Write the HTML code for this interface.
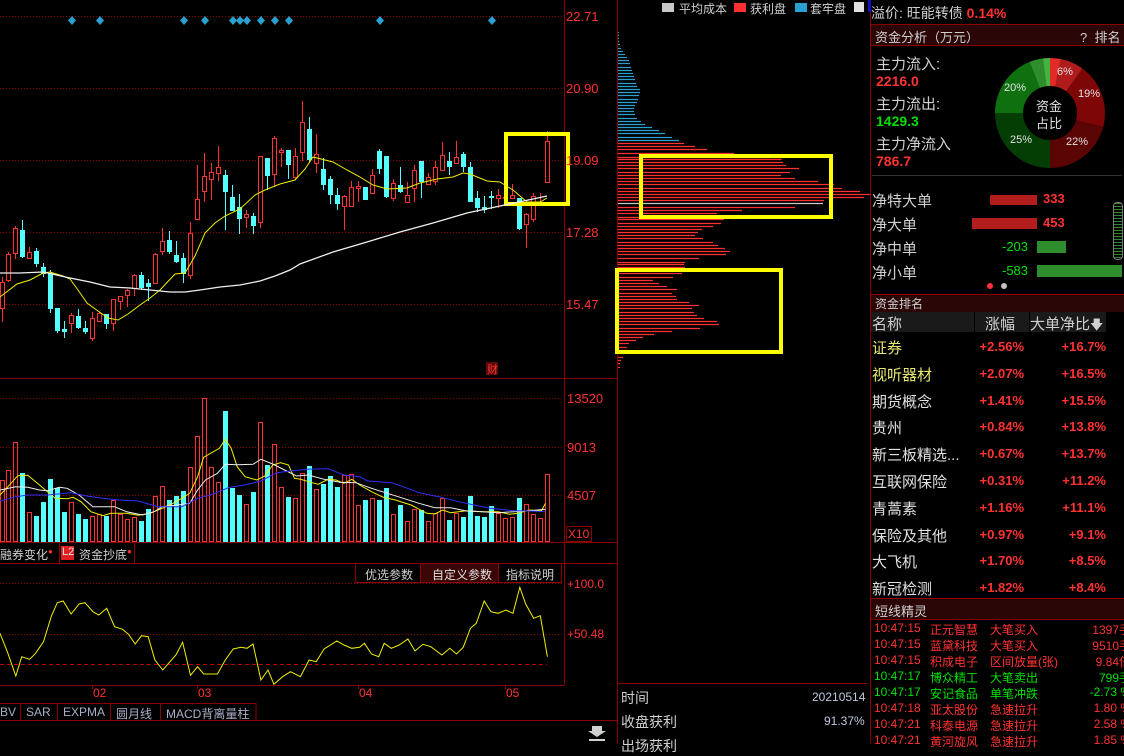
<!DOCTYPE html>
<html><head><meta charset="utf-8">
<style>
*{margin:0;padding:0;box-sizing:border-box}
body{width:1124px;height:743px;background:#000;overflow:hidden;position:relative;font-family:"Liberation Sans","Noto Sans CJK SC",sans-serif;color:#d0d0d0}
.a{position:absolute;white-space:nowrap}
.r{color:#ff3232}.g{color:#00e000}.y{color:#e8e870}.w{color:#e0e0e0}
</style></head><body>
<svg id="s" class="a" style="left:0;top:0" width="1124" height="743" xmlns="http://www.w3.org/2000/svg">
<g id="grid" stroke="#8a0000" stroke-dasharray="1,2" stroke-width="1">
<line x1="0" y1="16.5" x2="564" y2="16.5"/><line x1="0" y1="88.5" x2="564" y2="88.5"/><line x1="0" y1="160.5" x2="564" y2="160.5"/><line x1="0" y1="232.5" x2="564" y2="232.5"/><line x1="0" y1="304.5" x2="564" y2="304.5"/>
<line x1="0" y1="398.5" x2="564" y2="398.5"/><line x1="0" y1="447.5" x2="564" y2="447.5"/><line x1="0" y1="495.5" x2="564" y2="495.5"/>
<line x1="0" y1="583.5" x2="564" y2="583.5"/><line x1="0" y1="634.5" x2="564" y2="634.5"/>
</g>
<line x1="0" y1="664.5" x2="547" y2="664.5" stroke="#c00000" stroke-dasharray="4,3"/>
<g stroke="#8a0000" stroke-width="1" fill="none">
<line x1="564.5" y1="0" x2="564.5" y2="685"/>
<line x1="617.5" y1="0" x2="617.5" y2="743"/>
<line x1="0" y1="378.5" x2="617" y2="378.5"/>
<line x1="0" y1="542.5" x2="617" y2="542.5"/>
<line x1="0" y1="563.5" x2="617" y2="563.5"/>
<line x1="0" y1="685.5" x2="564" y2="685.5"/>
<line x1="0" y1="720.5" x2="617" y2="720.5"/>
<line x1="617" y1="683.5" x2="868" y2="683.5"/>
<line x1="870.5" y1="0" x2="870.5" y2="743"/>
<rect x="355.5" y="563.5" width="206" height="19"/>
<line x1="420.5" y1="563" x2="420.5" y2="582"/><line x1="498.5" y1="563" x2="498.5" y2="582"/>
<rect x="566.5" y="526.5" width="25" height="15"/>
<line x1="92.5" y1="685" x2="92.5" y2="689"/><line x1="197.5" y1="685" x2="197.5" y2="689"/><line x1="358.5" y1="685" x2="358.5" y2="689"/><line x1="505.5" y1="685" x2="505.5" y2="689"/>
<line x1="59.5" y1="543" x2="59.5" y2="563"/><line x1="134.5" y1="543" x2="134.5" y2="563"/>
<rect x="-1" y="703.5" width="257" height="17"/>
<line x1="20.5" y1="703" x2="20.5" y2="720"/><line x1="57.5" y1="703" x2="57.5" y2="720"/><line x1="110.5" y1="703" x2="110.5" y2="720"/><line x1="160.5" y1="703" x2="160.5" y2="720"/>
</g>
<rect x="421" y="564" width="77" height="18" fill="#3a0606"/>
<rect x="61" y="546" width="13" height="14" fill="#e02020"/>
<g id="cand"></g><g id="vol"></g>
<g id="chip"></g>
<g fill="none" stroke="#ffff00" stroke-width="4">
<rect x="506" y="134" width="62" height="70"/>
<rect x="641" y="156" width="190" height="61"/>
<rect x="617" y="270" width="164" height="82"/>
</g>
<g id="dia" fill="#2aa0d0"></g>
<rect x="486" y="362" width="12" height="13" fill="#5a0a0a"/>
<path d="M592 726h10v5h4l-9 6-9-6h4z M589 739h16v2h-16z" fill="#d0d0d0"/>
<rect x="662" y="3" width="12" height="9" fill="#c8c8c8"/><rect x="734" y="3" width="12" height="9" fill="#ff3030"/><rect x="795" y="3" width="12" height="9" fill="#2aa0d0"/>
<rect x="854" y="2" width="10" height="10" fill="#e0e0e0"/>
<rect x="868" y="0" width="3" height="12" fill="#1010c0"/>
</svg>

<div class="a r" style="left:566px;top:9px;font-size:13px">22.71</div>
<div class="a r" style="left:566px;top:81px;font-size:13px">20.90</div>
<div class="a r" style="left:566px;top:153px;font-size:13px">19.09</div>
<div class="a r" style="left:566px;top:225px;font-size:13px">17.28</div>
<div class="a r" style="left:566px;top:297px;font-size:13px">15.47</div>
<div class="a r" style="left:567px;top:391px;font-size:13px">13520</div>
<div class="a r" style="left:567px;top:440px;font-size:13px">9013</div>
<div class="a r" style="left:567px;top:488px;font-size:13px">4507</div>
<div class="a r" style="left:568px;top:527px;font-size:12px">X10</div>
<div class="a r" style="left:487px;top:361px;font-size:11px">财</div>
<div class="a r" style="left:567px;top:577px;font-size:12px">+100.0</div>
<div class="a r" style="left:567px;top:627px;font-size:12px">+50.48</div>
<div class="a r" style="left:93px;top:686px;font-size:12px">02</div>
<div class="a r" style="left:198px;top:686px;font-size:12px">03</div>
<div class="a r" style="left:359px;top:686px;font-size:12px">04</div>
<div class="a r" style="left:506px;top:686px;font-size:12px">05</div>
<div class="a" style="left:0;top:546px;font-size:12px">融券变化<sup class="r" style="font-size:8px">●</sup></div>
<div class="a w" style="left:62px;top:546px;font-size:11px">L2</div>
<div class="a" style="left:79px;top:546px;font-size:12px">资金抄底<sup class="r" style="font-size:8px">●</sup></div>
<div class="a" style="left:365px;top:566px;font-size:12px">优选参数</div>
<div class="a w" style="left:432px;top:566px;font-size:12px">自定义参数</div>
<div class="a" style="left:506px;top:566px;font-size:12px">指标说明</div>
<div class="a" style="left:0;top:705px;font-size:12px;color:#a8b0c8">BV</div>
<div class="a" style="left:26px;top:705px;font-size:12px;color:#a8b0c8">SAR</div>
<div class="a" style="left:63px;top:705px;font-size:12px;color:#a8b0c8">EXPMA</div>
<div class="a" style="left:116px;top:705px;font-size:12px;color:#a8b0c8">圆月线</div>
<div class="a" style="left:166px;top:705px;font-size:12px;color:#a8b0c8">MACD背离量柱</div>

<div class="a" style="left:679px;top:0px;font-size:12px">平均成本</div>
<div class="a" style="left:750px;top:0px;font-size:12px">获利盘</div>
<div class="a" style="left:810px;top:0px;font-size:12px">套牢盘</div>
<div class="a" style="left:621px;top:688px;font-size:14px">时间</div>
<div class="a" style="left:812px;top:690px;font-size:12px;color:#c0c8e0">20210514</div>
<div class="a" style="left:621px;top:712px;font-size:14px">收盘获利</div>
<div class="a" style="left:824px;top:714px;font-size:12px;color:#c0c8e0">91.37%</div>
<div class="a" style="left:621px;top:736px;font-size:14px">出场获利</div>

<div class="a" style="left:871px;top:3px;font-size:14px">溢价: 旺能转债 <b class="r">0.14%</b></div>
<div class="a" style="left:871px;top:24px;width:253px;height:22px;background:#2a0606;border-top:1px solid #8a0000;border-bottom:1px solid #8a0000"></div>
<div class="a" style="left:875px;top:27px;font-size:13px">资金分析（万元）</div>
<div class="a" style="left:1080px;top:27px;font-size:13px">?&nbsp; 排名</div>
<div class="a" style="left:876px;top:53px;font-size:15px">主力流入:</div>
<div class="a r" style="left:876px;top:73px;font-size:14px;font-weight:bold">2216.0</div>
<div class="a" style="left:876px;top:93px;font-size:15px">主力流出:</div>
<div class="a g" style="left:876px;top:113px;font-size:14px;font-weight:bold">1429.3</div>
<div class="a" style="left:876px;top:133px;font-size:15px">主力净流入</div>
<div class="a r" style="left:876px;top:153px;font-size:14px;font-weight:bold">786.7</div>
<div class="a" style="left:995px;top:58px;width:110px;height:110px;border-radius:50%;background:conic-gradient(#e22a26 0 3%,#b01c1c 3% 10%,#7e0606 10% 29%,#5a0404 29% 50%,#053e05 50% 75%,#0e700e 75% 94%,#2e8e2e 94% 98%,#44b440 98% 100%)"></div>
<div class="a" style="left:1023px;top:86px;width:54px;height:54px;border-radius:50%;background:#000"></div>
<div class="a w" style="left:1036px;top:96px;font-size:13px">资金</div>
<div class="a w" style="left:1036px;top:113px;font-size:13px">占比</div>
<div class="a w" style="left:1057px;top:66px;font-size:11px">6%</div>
<div class="a w" style="left:1078px;top:88px;font-size:11px">19%</div>
<div class="a w" style="left:1066px;top:136px;font-size:11px">22%</div>
<div class="a w" style="left:1010px;top:134px;font-size:11px">25%</div>
<div class="a w" style="left:1004px;top:82px;font-size:11px">20%</div>
<div class="a" style="left:872px;top:175px;width:250px;height:1px;background:#333"></div>
<div class="a" style="left:872px;top:190px;font-size:15px">净特大单</div>
<div class="a" style="left:990px;top:195px;width:47px;height:10px;background:#b21e1e"></div>
<div class="a r" style="left:1043px;top:191px;font-size:13px;font-weight:bold">333</div>
<div class="a" style="left:872px;top:214px;font-size:15px">净大单</div>
<div class="a" style="left:972px;top:218px;width:65px;height:11px;background:#b21e1e"></div>
<div class="a r" style="left:1043px;top:215px;font-size:13px;font-weight:bold">453</div>
<div class="a" style="left:872px;top:238px;font-size:15px">净中单</div>
<div class="a g" style="left:1002px;top:239px;font-size:13px">-203</div>
<div class="a" style="left:1037px;top:241px;width:29px;height:12px;background:#2e8e2e"></div>
<div class="a" style="left:872px;top:262px;font-size:15px">净小单</div>
<div class="a g" style="left:1002px;top:263px;font-size:13px">-583</div>
<div class="a" style="left:1037px;top:265px;width:85px;height:12px;background:#2e8e2e"></div>
<div class="a" style="left:987px;top:283px;width:6px;height:6px;border-radius:50%;background:#ff3040"></div>
<div class="a" style="left:1001px;top:283px;width:6px;height:6px;border-radius:50%;background:#c0c0c0"></div>
<div class="a" style="left:1113px;top:202px;width:10px;height:58px;border:1px solid #777;border-radius:4px;background:repeating-linear-gradient(#2a8a2a 0 1px,#000 1px 3px)"></div>
<div class="a" style="left:871px;top:294px;width:253px;height:18px;background:#2a0606;border-top:1px solid #8a0000"></div>
<div class="a" style="left:875px;top:295px;font-size:12px">资金排名</div>
<div class="a" style="left:871px;top:312px;width:235px;height:20px;background:#1a1a1a"></div>
<div class="a" style="left:974px;top:312px;width:1px;height:20px;background:#000"></div>
<div class="a" style="left:1029px;top:312px;width:1px;height:20px;background:#000"></div>
<div class="a" style="left:872px;top:313px;font-size:15px">名称</div>
<div class="a" style="left:985px;top:313px;font-size:15px">涨幅</div>
<div class="a" style="left:1030px;top:313px;font-size:15px">大单净比<span style="font-size:13px">🡇</span></div>
<div id="rank"></div>
<div class="a" style="left:871px;top:598px;width:253px;height:22px;background:#2a0606;border-top:1px solid #8a0000;border-bottom:1px solid #8a0000"></div>
<div class="a" style="left:875px;top:601px;font-size:13px">短线精灵</div>
<div id="dx"></div>

<script>
var N='http://www.w3.org/2000/svg';
function el(p,t,a){var e=document.createElementNS(N,t);for(var k in a)e.setAttribute(k,a[k]);p.appendChild(e);return e}
var s=document.getElementById('s');
var C=[[2,282,308,277,322,'r'],[8,254,280,252,282,'r'],[15,228,253,226,259,'r'],[22,230,256,220,258,'c'],[29,252,258,247,259,'r'],[36,251,263,248,267,'c'],[43,267,273,263,277,'c'],[50,273,308,270,313,'c'],[57,308,330,308,333,'c'],[64,329,331,321,338,'c'],[71,315,323,313,333,'r'],[78,316,327,309,329,'c'],[85,328,331,321,334,'c'],[92,318,338,312,341,'r'],[99,313,321,312,321,'r'],[106,314,323,314,329,'c'],[113,299,323,299,331,'r'],[120,296,301,296,310,'r'],[127,290,295,289,307,'r'],[134,275,288,274,296,'r'],[141,275,287,272,290,'c'],[148,283,286,279,301,'c'],[155,254,283,253,283,'r'],[162,241,251,228,255,'r'],[169,240,251,231,254,'c'],[176,255,261,241,263,'c'],[183,258,273,253,283,'c'],[190,233,275,222,279,'r'],[197,199,219,165,219,'r'],[204,176,191,153,202,'r'],[211,172,179,163,200,'r'],[218,167,173,146,181,'r'],[225,175,191,170,230,'c'],[232,197,210,185,210,'c'],[239,207,218,194,234,'c'],[246,214,217,210,228,'r'],[253,216,225,213,234,'c'],[260,156,222,156,228,'r'],[267,158,175,158,190,'c'],[274,138,174,136,187,'r'],[281,150,152,148,167,'r'],[288,150,164,150,179,'c'],[295,156,177,148,180,'r'],[302,122,152,101,161,'r'],[309,129,159,117,163,'c'],[316,154,163,134,173,'r'],[323,169,184,158,190,'c'],[330,179,194,176,204,'c'],[337,195,203,188,210,'c'],[344,196,206,195,230,'r'],[351,187,206,181,206,'r'],[358,186,188,181,202,'r'],[365,187,199,187,199,'c'],[372,175,193,169,193,'r'],[379,151,168,149,174,'c'],[386,156,196,156,198,'c'],[393,183,198,179,201,'r'],[400,185,191,167,193,'c'],[407,195,202,182,203,'r'],[414,170,188,165,202,'r'],[421,161,181,161,198,'c'],[428,177,184,173,185,'r'],[435,167,181,161,185,'r'],[442,155,170,142,170,'r'],[449,161,166,152,175,'c'],[456,157,163,141,163,'r'],[463,154,166,152,172,'c'],[470,167,201,162,202,'c'],[477,198,207,191,212,'c'],[484,207,209,196,213,'c'],[491,196,197,191,209,'c'],[498,195,198,189,208,'r'],[505,197,198,195,200,'r'],[512,195,198,184,199,'r'],[519,198,228,198,230,'c'],[526,214,224,213,248,'r'],[533,196,219,193,222,'r'],[540,202,203,193,206,'r'],[547,141,182,131,182,'r']];
var V=[480,470,442,473,512,516,502,479,488,512,502,514,519,516,514,516,500,514,519,517,521,509,496,486,500,496,491,467,436,398,467,482,411,488,495,504,492,422,465,444,487,497,498,473,466,489,484,476,487,475,474,505,500,498,500,488,514,505,521,509,510,521,513,498,520,513,517,496,516,517,506,513,518,517,498,504,514,518,474];
var cg=document.getElementById('cand'),vg=document.getElementById('vol');
var RED='#ff3232',CY='#54ffff';
C.forEach(function(c,i){var x=c[0],col=c[5]=='r'?RED:CY;
 el(cg,'line',{x1:x+.5,y1:c[3],x2:x+.5,y2:c[4],stroke:col});
 var h=Math.max(1,c[2]-c[1]);
 if(c[5]=='r'){el(cg,'rect',{x:x-1.5,y:c[1]+.5,width:4,height:h,fill:'#000',stroke:col})}
 else el(cg,'rect',{x:x-2,y:c[1],width:5,height:h+1,fill:col});
 var t=V[i];
 if(c[5]=='r')el(vg,'rect',{x:x-1.5,y:t+.5,width:4,height:541-t,fill:'none',stroke:col});
 else el(vg,'rect',{x:x-2,y:t,width:5,height:542-t,fill:col});
});
function pl(p,pts,col,sw){el(s,'polyline',{points:pts,fill:'none',stroke:col,'stroke-width':sw||1})}
pl(s,"0,297 17,284 30,280 43,273 50,272 63,276 70,279 78,290 87,303 98,311 108,318 118,320 128,314 140,305 150,298 160,290 175,274 185,273 195,256 205,233 215,223 225,216 240,209 255,195 265,190 280,184 295,180 305,169 313,157 333,162 347,170 360,177 373,185 387,189 407,188 420,183 437,179 453,177 463,173 470,174 487,181 500,182 513,190 527,202 540,202 547,198",'#f0f000');
pl(s,"0,273 20,273 43,272 70,278 90,282 110,287 130,288 150,290 170,292 185,292 200,290 220,287 240,285 260,281 275,276 290,270 300,264 333,252 367,242 400,232 433,223 467,213 500,206 533,199 547,196",'#f0f0f0',1.3);
function tp(str,oy,col){var a=str.trim().split(/\s+/).map(function(p){var q=p.split(',');return (q[0]/2.53).toFixed(1)+','+(oy+q[1]/3).toFixed(1)}).join(' ');pl(s,a,col)}
tp("0,375 20,350 45,317 70,316 95,340 120,365 140,385 170,386 185,382 205,395 230,425 260,437 280,430 320,430 350,436 380,430 400,420 430,405 460,385 480,370 500,320 515,262 540,245 555,235 570,208 585,235 600,290 620,320 650,330 670,318 690,285 710,278 730,285 745,325 760,328 790,338 805,343 830,328 850,330 870,340 890,328 910,345 940,365 970,382 1000,390 1040,405 1080,430 1100,432 1120,420 1140,428 1180,422 1220,425 1260,425 1290,433 1310,430 1340,420 1370,422 1380,400",370,'#f0f000');
tp("0,360 40,350 70,352 100,360 120,362 150,352 170,355 200,375 220,395 235,410 290,410 320,425 360,435 390,425 410,410 450,405 480,400 500,360 520,330 550,310 570,283 600,284 640,283 660,268 690,282 720,300 750,318 780,315 820,328 860,337 900,338 940,355 980,370 1020,385 1060,400 1100,413 1140,413 1180,423 1220,425 1260,428 1300,425 1340,422 1380,418",370,'#f0f0f0');
tp("0,393 40,380 70,375 120,375 180,368 220,378 260,385 300,390 350,393 400,410 460,410 500,385 540,372 580,352 620,345 660,333 700,308 740,302 780,298 830,296 870,315 910,320 930,333 990,338 1020,350 1060,368 1110,380 1160,395 1200,405 1240,415 1300,422 1340,423 1380,425",370,'#3030ff');
tp("0,310 20,370 40,438 55,380 75,388 90,370 110,335 130,258 145,218 160,213 180,252 200,222 215,218 235,245 250,255 270,235 290,290 310,298 325,313 342,342 358,317 375,320 392,390 412,420 430,395 445,375 462,337 482,436 500,410 515,432 550,432 570,390 590,357 610,352 625,355 640,342 660,450 678,420 693,463 715,440 735,425 760,440 782,390 800,395 820,357 852,333 870,345 890,355 910,352 922,340 940,372 958,380 972,340 990,355 1010,345 1032,327 1050,363 1070,343 1090,350 1118,375 1138,355 1155,372 1172,352 1190,295 1205,280 1225,213 1242,245 1260,250 1280,240 1298,250 1315,172 1330,222 1350,265 1367,257 1385,380",530,'#f0f000');
// diamonds
[72,100,184,205,233,240,247,261,275,289,380,492].forEach(function(x){el(document.getElementById('dia'),'path',{d:'M'+x+' 16l4 4.5-4 4.5-4-4.5z'})});
// chips
var B="97:12 105:12 115:12 124:12 133:15 145:18 153:24 162:30 172:36 181:42 190:45 200:48 210:51 218:54 228:57 237:60 248:63 258:66 268:75 276:75 286:72 296:69 306:66 316:60 325:57 334:57 343:60 354:66 363:78 373:90 382:111 391:132 400:150 411:171 421:192";
var R="430:207 439:240 448:276 460:357 470:500 478:500 487:504 496:513 505:552 516:525 526:498 535:540 544:609 552:657 565:681 574:735 582:765 592:747 601:627 610:624 622:540 631:381 640:306 650:330 658:327 670:318 679:294 688:261 697:249 706:240 715:264 727:294 736:309 745:330 754:345 763:333 775:252 785:210 792:207 800:210 810:205 820:201 832:174 841:114 850:132 859:156 868:186 879:171 888:183 897:186 907:222 916:252 925:231 935:237 946:246 955:267 964:306 973:312 985:255 994:171 1003:117 1012:84 1021:63 1030:42 1041:36 1050:36 1060:30 1070:24 1080:18 1090:15 1100:15";
var ch=document.getElementById('chip');
function bars(str,col){str.split(' ').forEach(function(p){var q=p.split(':'),y=Math.round(q[0]/3)+.5,e=615+q[1]/3;el(ch,'line',{x1:618,y1:y,x2:e,y2:y,stroke:(q[0]=='610'?'#c8c8c8':col),'stroke-width':1.2})})}
bars(B,'#2aa0d0');bars(R,'#ff3030');
// rank table
var rk=[['证券','+2.56%','+16.7%','y'],['视听器材','+2.07%','+16.5%','y'],['期货概念','+1.41%','+15.5%','w'],['贵州','+0.84%','+13.8%','w'],['新三板精选...','+0.67%','+13.7%','w'],['互联网保险','+0.31%','+11.2%','w'],['青蒿素','+1.16%','+11.1%','w'],['保险及其他','+0.97%','+9.1%','w'],['大飞机','+1.70%','+8.5%','w'],['新冠检测','+1.82%','+8.4%','w']];
var h='';rk.forEach(function(r,i){var y=337+i*26.8;
h+='<div class="a '+r[3]+'" style="left:872px;top:'+y+'px;font-size:15px">'+r[0]+'</div>';
h+='<div class="a r" style="right:100px;top:'+(y+2)+'px;font-size:13px;font-weight:bold">'+r[1]+'</div>';
h+='<div class="a r" style="right:18px;top:'+(y+2)+'px;font-size:13px;font-weight:bold">'+r[2]+'</div>';});
document.getElementById('rank').innerHTML=h;
var dx=[['10:47:15','正元智慧','大笔买入','1397手','r'],['10:47:15','蓝黛科技','大笔买入','9510手','r'],['10:47:15','积成电子','区间放量(张)','9.84倍','r'],['10:47:17','博众精工','大笔卖出','799手','g'],['10:47:17','安记食品','单笔冲跌','-2.73 %','g'],['10:47:18','亚太股份','急速拉升','1.80 %','r'],['10:47:21','科泰电源','急速拉升','2.58 %','r'],['10:47:21','黄河旋风','急速拉升','1.85 %','r']];
h='';dx.forEach(function(r,i){var y=621+i*16;
h+='<div class="a '+r[4]+'" style="left:874px;top:'+y+'px;font-size:12px">'+r[0]+'</div>';
h+='<div class="a '+r[4]+'" style="left:930px;top:'+y+'px;font-size:12px">'+r[1]+'</div>';
h+='<div class="a '+(r[4]=='g'?'g':'r')+'" style="left:990px;top:'+y+'px;font-size:12px">'+r[2]+'</div>';
h+='<div class="a '+r[4]+'" style="left:1055px;width:76px;text-align:right;top:'+y+'px;font-size:12px">'+r[3]+'</div>';});
document.getElementById('dx').innerHTML=h;
</script>
</body></html>
